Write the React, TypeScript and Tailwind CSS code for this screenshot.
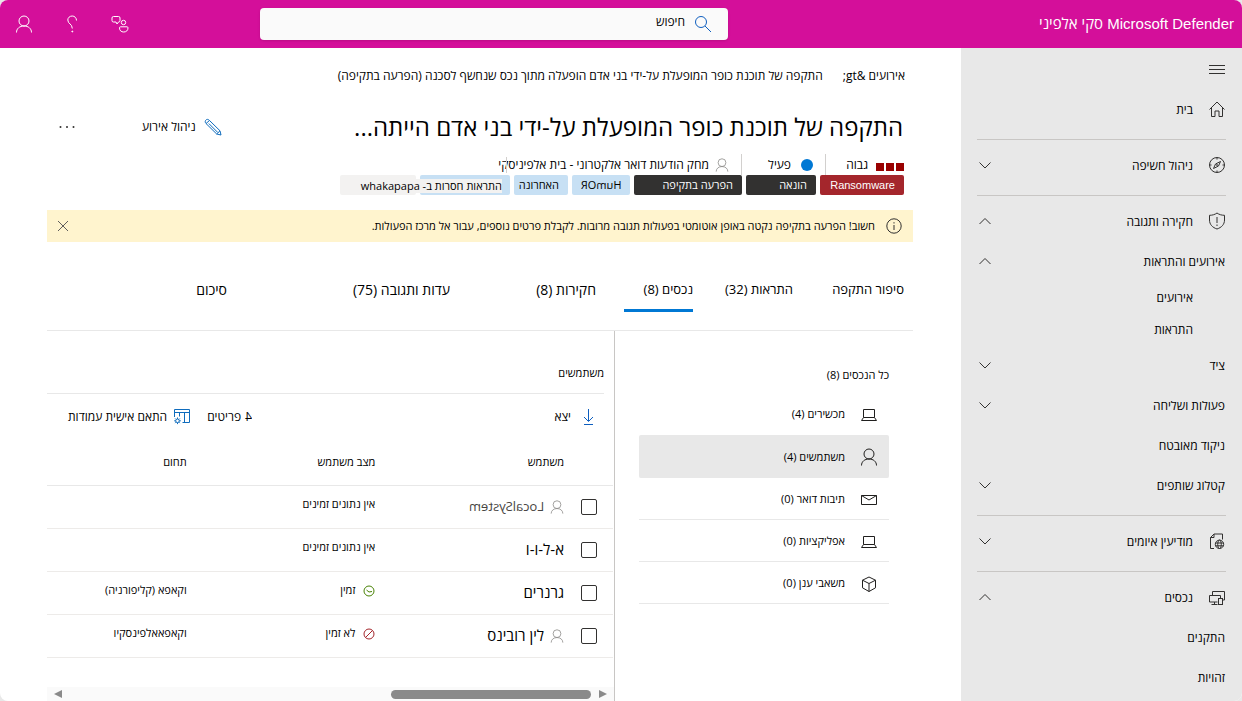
import {useState} from 'react'
import type {ReactNode} from 'react'
import clsx from 'clsx'

type IconProps = {className?: string}

const Svg = ({className, box = 18, children}: {className?: string; box?: number; children: ReactNode}) => (
  <svg
    className={clsx('shrink-0', className)}
    viewBox={`0 0 ${box} ${box}`}
    fill="none"
    stroke="currentColor"
    strokeWidth="1"
    aria-hidden="true"
  >
    {children}
  </svg>
)

const PersonIcon = ({className}: IconProps) => (
  <Svg className={className}>
    <circle cx="9" cy="6" r="5" />
    <path d="M1.500 17.500c0-4 3.200-6.500 7.500-6.500s7.500 2.500 7.500 6.500" />
  </Svg>
)

const HelpIcon = ({className}: IconProps) => (
  <Svg className={className}>
    <path d="M13.500 5.500c0-2.500-1.800-4.500-4.300-4.500S4.800 2.800 4.800 5c0 4 4.500 3.800 4.500 8.500" />
    <circle cx="9.300" cy="16.500" r=".5" fill="currentColor" />
  </Svg>
)

const CommunityIcon = ({className}: IconProps) => (
  <Svg className={className}>
    <path d="M2.500 1.500h5a1.500 1.500 0 0 1 1.500 1.500v2.500a1.500 1.500 0 0 1-1.500 1.500L6 9 5 7H2.500A1.500 1.500 0 0 1 1 5.500V3a1.500 1.500 0 0 1 1.500-1.500z" />
    <circle cx="12.500" cy="7.500" r="2.200" />
    <path d="M9.500 11.800h6.500a1 1 0 0 1 1 1c0 2.700-1.700 4.200-4.300 4.200s-4.200-1.500-4.200-4.200a1 1 0 0 1 1-1z" />
  </Svg>
)

const SearchIcon = ({className}: IconProps) => (
  <Svg className={className}>
    <circle cx="7" cy="7" r="5.500" />
    <path d="m11 11 6 6" />
  </Svg>
)

const HomeIcon = ({className}: IconProps) => (
  <Svg className={className}>
    <path d="M1.500 9.500 9 2l7.500 7.500M3.500 8v8.500H7v-5.500h4v5.500h3.500V8" />
  </Svg>
)

const CompassIcon = ({className}: IconProps) => (
  <Svg className={className}>
    <circle cx="9" cy="9" r="7.500" />
    <path d="M12.500 5.500 10.500 10l-5 2.500L7.500 8zM9 1.500v2M9 14.500v2M1.500 9h2M14.500 9h2" />
    <circle cx="9" cy="9" r=".5" />
  </Svg>
)

const ShieldIcon = ({className}: IconProps) => (
  <Svg className={className}>
    <path d="M9 1C7 2.500 4.500 3.300 1.500 3.300V8c0 4.500 3 7.500 7.500 9 4.500-1.500 7.500-4.500 7.500-9V3.300C13.500 3.300 11 2.500 9 1zM9 5v6M9 12.500v1.500" />
  </Svg>
)

const ThreatIcon = ({className}: IconProps) => (
  <Svg className={className}>
    <path d="M6 16.500H2.500v-11L6 2h8.500v5.500M2.500 5.500H6V2" />
    <circle cx="11.500" cy="12.300" r="4.200" />
    <ellipse cx="11.500" cy="12.300" rx="1.800" ry="4.200" />
    <path d="M7.500 11h8M7.500 13.800h8" />
  </Svg>
)

const DevicesIcon = ({className}: IconProps) => (
  <Svg className={className}>
    <path d="M4.500 7.500v-4h12V12h-2M9.500 14h-8V7.500h11V10M3.500 16.500h6M6.500 14v2.500" />
    <rect x="10.500" y="10.500" width="4" height="6" />
  </Svg>
)

const LaptopIcon = ({className}: IconProps) => (
  <Svg className={className}>
    <path d="M3.500 3.500h11v8h-11zM3.500 11.500l-2 3h15l-2-3" />
  </Svg>
)

const MailIcon = ({className}: IconProps) => (
  <Svg className={className}>
    <path d="M1.500 4.500h15v9h-15zM1.500 4.500 9 9l7.500-4.500" />
  </Svg>
)

const CubeIcon = ({className}: IconProps) => (
  <Svg className={className}>
    <path d="M9 2 15.500 5.200v7.600L9 16.500l-6.500-3.700V5.200zM2.500 5.200 9 8.500l6.500-3.300M9 8.500v8" />
  </Svg>
)

const PencilIcon = ({className}: IconProps) => (
  <Svg className={className}>
    <path d="M1.500 2.500c1-1.500 2.800-1.500 4 0L16 12.800l1 4.200-4.300-1L2 5.500c-.8-.9-1-2-.5-3zM2 5.500l3.500-3M12.700 16l3.300-3.200M4.800 5.500l9 9" />
  </Svg>
)

const DownloadIcon = ({className}: IconProps) => (
  <Svg className={className}>
    <path d="M9.500 1v12M5 9l4.500 4.500L14 9M5 16.500h9" />
  </Svg>
)

const ColumnsIcon = ({className}: IconProps) => (
  <Svg className={className}>
    <path d="M1.500 9V1.500h15v13h-7M1.500 4.500h15M6.500 4.500v4M11.500 4.500v10" />
    <circle cx="4.500" cy="12.800" r="1.800" />
    <path d="M4.500 9.500v1.500M4.500 14.600v1.500M1.200 12.800h1.500M6.300 12.800h1.500M2.200 10.500l1 1M5.800 14.100l1 1M6.800 10.500l-1 1M3.200 14.100l-1 1" />
  </Svg>
)

const InfoIcon = ({className}: IconProps) => (
  <Svg className={className}>
    <circle cx="9" cy="9" r="7.200" />
    <path d="M9 8v5M9 5.200v1.300" />
  </Svg>
)

const Chevron = ({up}: {up?: boolean}) => (
  <Svg className="size-4 text-[#323130]" box={16}>
    <path d={up ? 'M2.500 11 8 5.500l5.500 5.500' : 'M2.500 5.500 8 11l5.500-5.500'} />
  </Svg>
)

type NavEntry = {
  label?: string
  icon?: (props: IconProps) => ReactNode
  open?: boolean
  chevron?: boolean
  sub?: boolean
}

// an entry without a label is a divider
const navEntries: NavEntry[] = [
  {label: 'בית', icon: HomeIcon},
  {},
  {label: 'ניהול חשיפה', icon: CompassIcon, chevron: true},
  {},
  {label: 'חקירה ותגובה', icon: ShieldIcon, chevron: true, open: true},
  {label: 'אירועים והתראות', chevron: true, open: true},
  {label: 'אירועים', sub: true},
  {label: 'התראות', sub: true},
  {label: 'ציד', chevron: true},
  {label: 'פעולות ושליחה', chevron: true},
  {label: 'ניקוד מאובטח'},
  {label: 'קטלוג שותפים', chevron: true},
  {},
  {label: 'מודיעין איומים', icon: ThreatIcon, chevron: true},
  {},
  {label: 'נכסים', icon: DevicesIcon, chevron: true, open: true},
  {label: 'התקנים'},
  {label: 'זהויות'}
]

const tabs = [
  {label: 'סיפור התקפה', size: 'w-[83px] text-[13px]'},
  {label: 'התראות (32)', size: 'w-[72px] text-[13px]'},
  {label: 'נכסים (8)', size: 'w-[69px] text-[13px]'},
  {label: 'חקירות (8)', size: 'w-[118px] text-sm'},
  {label: 'עדות ותגובה (75)', size: 'w-[195px] text-sm'},
  {label: 'סיכום', size: 'w-[60px] text-sm'}
]

const assets = [
  {label: 'מכשירים (4)', icon: LaptopIcon},
  {label: 'משתמשים (4)', icon: PersonIcon},
  {label: 'תיבות דואר (0)', icon: MailIcon},
  {label: 'אפליקציות (0)', icon: LaptopIcon},
  {label: 'משאבי ענן (0)', icon: CubeIcon}
]

const users = [
  {name: 'LocalSystem', person: true, mirrored: true, status: 'אין נתונים זמינים', domain: ''},
  {name: 'א-ל-ו-ו', status: 'אין נתונים זמינים', domain: ''},
  {name: 'גרנרים', status: 'זמין', ok: true, domain: 'וקאפא (קליפורניה)'},
  {name: 'לין רובינס', person: true, status: 'לא זמין', blocked: true, domain: 'וקאפאאלפינסקיו'}
]

const Header = () => (
  <header className="flex h-12 shrink-0 items-center bg-[#d40f9a] text-white">
    <h1 className="flex-1 pr-2 font-['Liberation_Sans','Open_Sans',sans-serif] text-[15px]">
      Microsoft Defender <span className="font-['Open_Sans',sans-serif]">סקי אלפיני</span>
    </h1>

    <label className="flex h-8 w-[468px] items-center gap-[9px] rounded bg-[#fafafa] px-4 shadow-sm">
      <SearchIcon className="size-[18px] text-[#0f5fbf]" />
      <input
        type="search"
        aria-label="חיפוש"
        placeholder="חיפוש"
        className="h-6 min-w-0 flex-1 bg-transparent pb-1.5 text-xs text-black outline-none placeholder:text-black"
      />
    </label>

    <div className="flex w-[260px] items-center justify-end gap-[30px] pl-[15px]">
      <button type="button" aria-label="קהילה">
        <CommunityIcon className="size-[18px]" />
      </button>
      <button type="button" aria-label="עזרה">
        <HelpIcon className="size-[18px]" />
      </button>
      <button type="button" aria-label="חשבון">
        <PersonIcon className="size-[18px]" />
      </button>
    </div>
  </header>
)

const Sidebar = () => (
  <nav className="w-[281px] shrink-0 bg-[#e8e8e8] px-4 pb-1 text-xs">
    <div className="flex h-[41px] items-center">
      <button type="button" aria-label="תפריט">
        <Svg className="size-[18px] text-[#323130]">
          <path d="M1 5.500h16M1 9.500h16M1 13.500h16" />
        </Svg>
      </button>
    </div>

    {navEntries.map((entry, i) => {
      if (!entry.label) return <hr key={i} className="mt-2.5 mb-[5px] border-[#c8c6c4]" />
      const Icon = entry.icon
      return (
        <button
          key={i}
          type="button"
          className={clsx(
            'flex w-full items-center gap-[15px] text-right',
            entry.sub ? 'h-8' : 'h-10',
            entry.sub && 'pr-[33px]',
            !entry.sub && !Icon && 'pr-px'
          )}
        >
          {Icon && <Icon className="size-[18px] text-[#323130]" />}
          <span className="flex-1 pt-0.5">{entry.label}</span>
          {entry.chevron && <Chevron up={entry.open} />}
        </button>
      )
    })}
  </nav>
)

const Tag = ({className, children}: {className: string; children?: ReactNode}) => (
  <span className={clsx('flex h-5 items-center rounded-xs px-[9px] text-[11px]', className)}>{children}</span>
)

const IncidentHead = () => (
  <>
    <div className="flex h-[54px] items-center gap-5 pt-0.5 pr-2 text-xs">
      <a href="#incidents">{'אירועים &gt;'}</a>
      <span>התקפה של תוכנת כופר המופעלת על-ידי בני אדם הופעלה מתוך נכס שנחשף לסכנה (הפרעה בתקיפה)</span>
    </div>

    <div className="flex h-[52px] items-center pr-2.5 pb-0.5 pl-3">
      <h2 className="flex-1 text-2xl">התקפה של תוכנת כופר המופעלת על-ידי בני אדם הייתה...</h2>
      <button type="button" className="flex items-center gap-2 text-xs">
        <PencilIcon className="size-[18px] text-[#0f6cbd]" />
        ניהול אירוע
      </button>
      <button type="button" aria-label="עוד" className="mr-[67px]">
        <svg className="h-2 w-4" viewBox="0 0 16 8" fill="#323130" aria-hidden="true">
          <circle cx="1.500" cy="4" r="1" />
          <circle cx="8" cy="4" r="1" />
          <circle cx="14.500" cy="4" r="1" />
        </svg>
      </button>
    </div>

    <div className="flex h-[21px] items-center pr-[9px] text-xs">
      <span className="ml-2 flex gap-0.5 pt-1">
        <i className="size-2 bg-[#990000]" />
        <i className="size-2 bg-[#990000]" />
        <i className="size-2 bg-[#990000]" />
      </span>
      <span className="w-[42px]">גבוה</span>
      <span className="ml-3 h-full w-px bg-[#d2d0ce]" />
      <i className="ml-2.5 size-3 rounded-full bg-[#0078d4]" />
      <span className="w-[49px]">פעיל</span>
      <span className="ml-3 h-full w-px bg-[#d2d0ce]" />
      <PersonIcon className="ml-1.5 size-3.5 text-[#8a8886]" />
      <span className="relative">
        מחק הודעות דואר אלקטרוני - בית אלפיניסקי
        <i className="absolute inset-y-0 left-2 w-px bg-[#d2d0ce]" />
      </span>
    </div>

    <div className="flex gap-1 pr-[9px]">
      <Tag className="w-[84px] bg-[#a4262c] font-['Liberation_Sans',sans-serif] text-white">Ransomware</Tag>
      <Tag className="w-[70px] bg-[#323130] text-white">הונאה</Tag>
      <Tag className="w-[108px] bg-[#323130] text-white">הפרעה בתקיפה</Tag>
      <Tag className="w-[58px] bg-[#c7e0f4]">
        <bdi className="-scale-x-100">HumOR</bdi>
      </Tag>
      <Tag className="w-[54px] bg-[#c7e0f4]">האחרונה</Tag>
      <span className="relative flex gap-1">
        <Tag className="w-[90px] bg-[#c7e0f4]" />
        <Tag className="w-[76px] bg-[#f3f2f1]" />
        <span className="absolute right-2 bottom-0.5 bg-[#f3f2f1] text-[11px] leading-[14px] whitespace-nowrap">
          התראות חסרות ב- whakapapa
        </span>
      </span>
    </div>

    <div className="mt-[15px] flex h-8 items-center gap-2.5 bg-[#fff4ce] px-2.5 text-[11px]">
      <InfoIcon className="size-[18px] text-[#323130]" />
      <p className="flex-1">
        חשוב! הפרעה בתקיפה נקטה באופן אוטומטי בפעולות תגובה מרובות. לקבלת פרטים נוספים, עבור אל מרכז הפעולות.
      </p>
      <button type="button" aria-label="סגור">
        <Svg className="size-3 text-[#605e5c]" box={12}>
          <path d="m1 1 10 10M11 1 1 11" />
        </Svg>
      </button>
    </div>
  </>
)

const AssetList = () => {
  const [selected, setSelected] = useState(1)

  return (
    <section className="w-[299px] shrink-0 border-l border-[#c8c6c4] px-6 text-[11px]">
      <h3 className="flex h-[62px] items-center pt-[26px]">כל הנכסים (8)</h3>
      {assets.map(({label, icon: Icon}, i) => (
        <button
          key={label}
          type="button"
          onClick={() => setSelected(i)}
          className={clsx(
            'flex w-full items-center gap-[15px] border-b px-[11px] pt-0.5 text-right',
            i === selected ? 'h-[43px] rounded-xs border-[#e8e8e8] bg-[#e8e8e8]' : 'h-[42px]',
            i !== selected && (i === 0 ? 'border-transparent' : 'border-[#e8e8e8]')
          )}
        >
          <Icon className="size-[18px] text-[#201f1e]" />
          {label}
        </button>
      ))}
    </section>
  )
}

const UsersPanel = () => (
  <section className="flex min-w-0 flex-1 flex-col text-[11px]">
    <h3 className="mr-2.5 flex h-[63px] items-center border-b border-[#e8e8e8] pt-[22px]">משתמשים</h3>

    <div className="flex h-[46px] items-center pr-[17px] pb-px pl-[21px] text-xs">
      <button type="button" className="flex items-center gap-2">
        <DownloadIcon className="size-[18px] text-[#0f5fbf]" />
        יצא
      </button>
      <span className="mr-auto ml-4 flex gap-1">
        <bdi className="-scale-x-100">4</bdi>
        פריטים
      </span>
      <button type="button" className="flex items-center gap-1.5">
        <ColumnsIcon className="size-[18px] text-[#0f6cbd]" />
        התאם אישית עמודות
      </button>
    </div>

    <div className="pr-px">
      <table className="w-full table-fixed border-collapse">
        <thead>
          <tr className="h-[45px] border-b border-[#e8e8e8]">
            <th className="w-[49px]" />
            <th className="w-1/3 text-right font-normal">משתמש</th>
            <th className="w-1/3 text-right font-normal">מצב משתמש</th>
            <th className="text-right font-normal">תחום</th>
          </tr>
        </thead>
        <tbody>
          {users.map((user) => (
            <tr key={user.name} className="h-[43px] border-b border-[#edebe9]">
              <td className="pr-4">
                <input
                  type="checkbox"
                  aria-label={user.name}
                  className="block size-4 appearance-none rounded-xs border border-[#323130] checked:bg-[#0078d4]"
                />
              </td>
              <td>
                <span className="flex items-center gap-1.5 text-[15px]">
                  {user.person && <PersonIcon className="size-3.5 text-[#8a8886]" />}
                  <bdi className={clsx(user.mirrored && '-scale-x-100 text-[13px] text-[#484644]')}>{user.name}</bdi>
                </span>
              </td>
              <td className="pb-1">
                <span className="flex items-center gap-2">
                  {user.ok && (
                    <Svg className="size-3 text-[#498205]" box={12}>
                      <circle cx="6" cy="6" r="5" />
                      <path d="m3.500 5 2.500 2 3-.5" />
                    </Svg>
                  )}
                  {user.blocked && (
                    <Svg className="size-3 text-[#a4262c]" box={12}>
                      <circle cx="6" cy="6" r="5" />
                      <path d="m2.500 9.500 7-7" />
                    </Svg>
                  )}
                  {user.status}
                </span>
              </td>
              <td className="pb-1">{user.domain}</td>
            </tr>
          ))}
        </tbody>
      </table>
    </div>

    <div className="mt-auto flex h-3.5 items-center gap-2 bg-[#fafafa] px-[7px]">
      <button
        type="button"
        aria-label="גלול ימינה"
        className="border-y-4 border-l-8 border-y-transparent border-l-[#8a8a8a]"
      />
      <span className="h-[9px] w-[200px] rounded-full bg-[#8a8a8a]" />
      <button
        type="button"
        aria-label="גלול שמאלה"
        className="mr-auto border-y-4 border-r-8 border-y-transparent border-r-[#8a8a8a]"
      />
    </div>
  </section>
)

const App = () => {
  const [tab, setTab] = useState(2)

  return (
    <div className="min-h-screen bg-[#e8e8e8] font-['Open_Sans','Liberation_Sans',sans-serif] text-black" dir="rtl">
      <div className="flex min-h-screen flex-col overflow-hidden rounded-lg bg-white">
        <Header />
        <div className="flex flex-1">
          <Sidebar />
          <main className="flex min-w-0 flex-1 flex-col pr-12 pl-[47px]">
            <IncidentHead />

            <div role="tablist" className="flex h-[89px] items-end gap-7 border-b border-[#e8e8e8] pr-[9px] pb-[18px]">
              {tabs.map(({label, size}, i) => (
                <button
                  key={label}
                  type="button"
                  role="tab"
                  aria-selected={i === tab}
                  onClick={() => setTab(i)}
                  className={clsx(
                    'h-[38px] shrink-0 border-b-3 pb-1 text-right whitespace-nowrap',
                    size,
                    i === tab ? 'border-[#0078d4]' : 'border-transparent'
                  )}
                >
                  {label}
                </button>
              ))}
            </div>

            <div className="flex flex-1">
              <AssetList />
              <UsersPanel />
            </div>
          </main>
        </div>
      </div>
    </div>
  )
}

export default App
